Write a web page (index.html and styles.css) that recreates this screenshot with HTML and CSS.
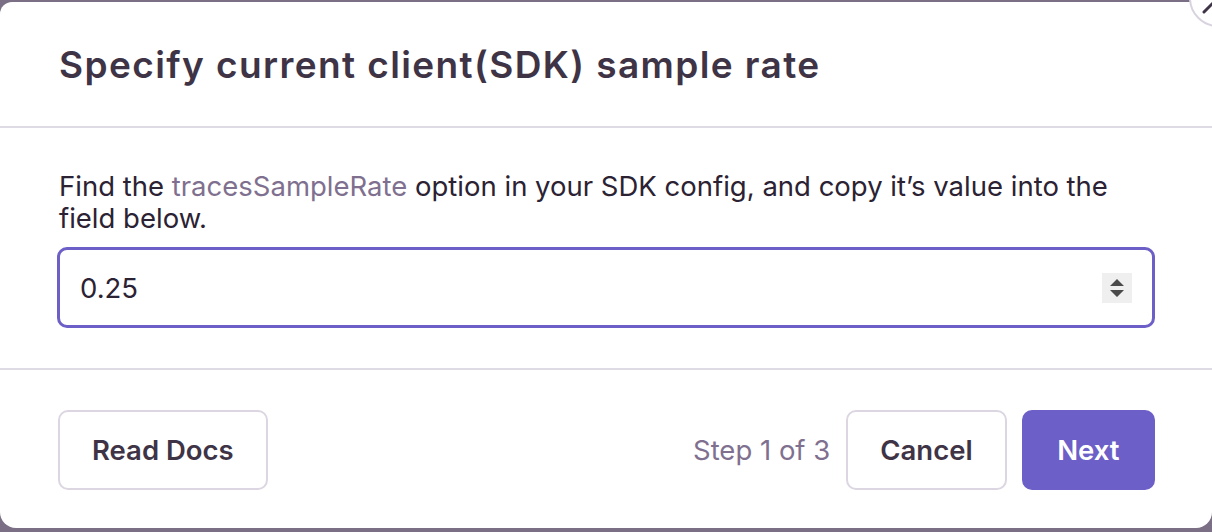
FILE: index.html
```html
<!DOCTYPE html>
<html>
<head>
<meta charset="utf-8">
<link rel="stylesheet" href="styles.css">
</head>
<body>
<div class="backdrop">
  <div class="modal">
    <button class="close" aria-label="Close">
      <svg width="58" height="58" viewBox="0 0 58 58"><path d="M15 15 L43 43 M43 15 L15 43" stroke="#3e3446" stroke-width="3" stroke-linecap="round" fill="none"/></svg>
    </button>
    <div class="header">
      <h1 class="title">Specify current client(SDK) sample rate</h1>
    </div>
    <div class="body">
      <p class="desc">Find the <span class="code">tracesSampleRate</span> option in your SDK config, and copy it’s value into the field below.</p>
      <div class="input">
        <span class="value">0.25</span>
        <span class="spinner">
          <svg width="30" height="30" viewBox="0 0 30 30"><path d="M8 13 L15 6 L22 13 Z M8 17 L22 17 L15 24 Z" fill="#4a4a4a"/></svg>
        </span>
      </div>
    </div>
    <div class="footer">
      <button class="btn">Read Docs</button>
      <div class="right">
        <span class="step">Step 1 of 3</span>
        <button class="btn cancel">Cancel</button>
        <button class="btn primary">Next</button>
      </div>
    </div>
  </div>
</div>
</body>
</html>
```
FILE: styles.css
```css
html, body {
  margin: 0;
  padding: 0;
  background: #7b6f86;
  width: 1212px;
  height: 532px;
  overflow: hidden;
  font-family: Inter, "Noto Sans", sans-serif;
  color: #3e3446;
}
.backdrop {
  padding-top: 2px;
}
.modal {
  position: relative;
  background: #fff;
  border-radius: 12px 12px 16px 16px;
  height: 526px;
  display: flex;
  flex-direction: column;
}
.close {
  position: absolute;
  left: 1189px;
  top: -33px;
  width: 58px;
  height: 58px;
  border-radius: 50%;
  border: 2px solid #d9d3e0;
  background: #fff;
  padding: 0;
  box-sizing: border-box;
  display: flex;
  align-items: center;
  justify-content: center;
}
.close svg { display: block; flex: none; }
.header {
  height: 124px;
  border-bottom: 2px solid #dfdbe5;
  display: flex;
  align-items: center;
  padding: 0 59px;
}
.title {
  margin: 0;
  font-size: 37px;
  font-weight: 600;
  letter-spacing: 1.4px;
  color: #3e3446;
}
.body {
  padding: 42px 57px 40px 57px;
  border-bottom: 2px solid #dfdbe5;
}
.desc {
  margin: 0 0 13px 2px;
  font-size: 27.5px;
  line-height: 32px;
  color: #2b2233;
}
.code { color: #80708f; }
.input {
  height: 81px;
  box-sizing: border-box;
  border: 3px solid #6c5fc7;
  border-radius: 10px;
  display: flex;
  align-items: center;
  justify-content: space-between;
  padding: 0 20px 0 20px;
}
.value {
  font-size: 27.5px;
  color: #2b2233;
}
.spinner {
  width: 30px;
  height: 30px;
  background: #efefef;
  display: flex;
}
.footer {
  flex: 1;
  display: flex;
  align-items: flex-start;
  justify-content: space-between;
  padding: 40px 57px 0 58px;
}
.right {
  display: flex;
  align-items: center;
  gap: 15px;
}
.step {
  font-size: 27.5px;
  color: #80708f;
  margin-right: 1px;
}
.btn {
  height: 80px;
  box-sizing: border-box;
  border: 2px solid #dcd6e2;
  border-radius: 10px;
  background: #fff;
  font-family: Inter, "Noto Sans", sans-serif;
  font-size: 27.5px;
  font-weight: 600;
  color: #3e3446;
  padding: 0 32px;
}
.primary {
  background: #6c5fc7;
  border-color: #6c5fc7;
  color: #fff;
  padding: 0 33.5px;
}
```
